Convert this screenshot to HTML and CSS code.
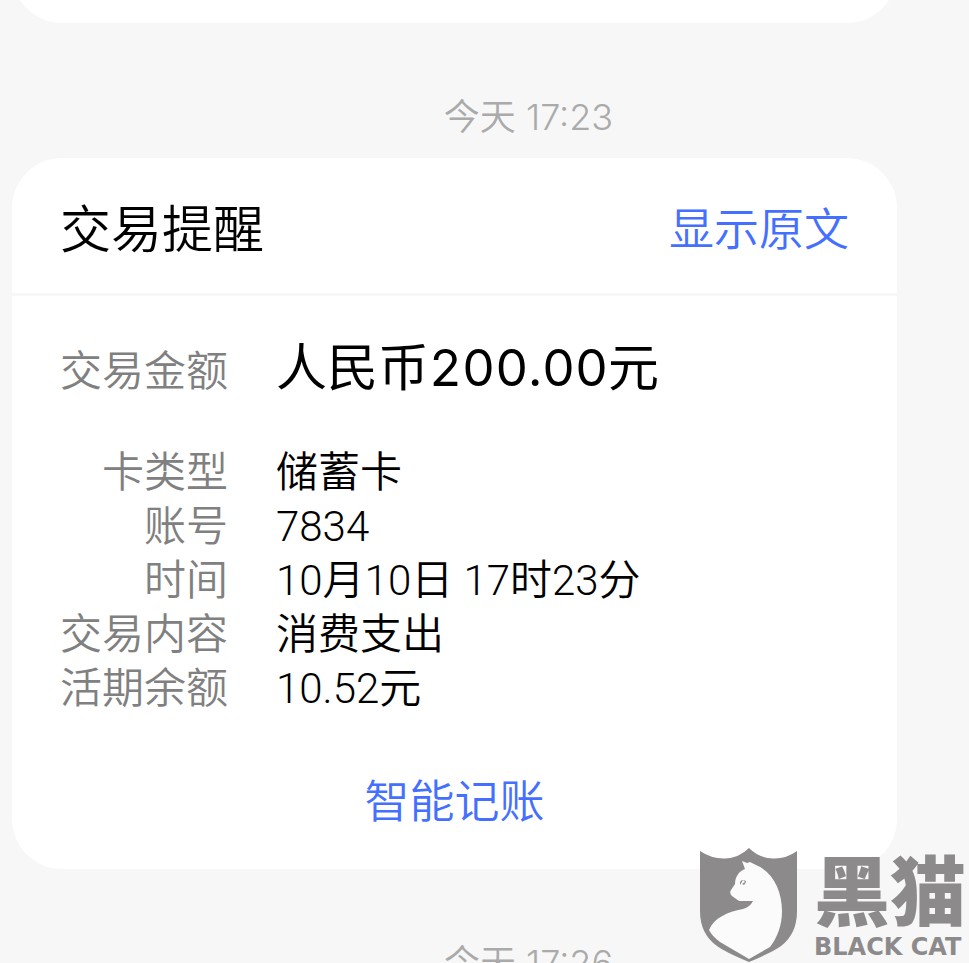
FILE: index.html
```html
<!DOCTYPE html>
<html lang="zh-CN">
<head>
<meta charset="utf-8">
<meta name="viewport" content="width=device-width, initial-scale=1">
<title>交易提醒</title>
<link rel="stylesheet" href="styles.css">
</head>
<body>
<main class="thread">
  <div class="card card-previous"></div>
  <time class="stamp">今天 17:23</time>
  <article class="card">
    <header class="card-header">
      <h1 class="title">交易提醒</h1>
      <button type="button" class="action">显示原文</button>
    </header>
    <div class="card-body">
      <dl class="amount">
        <dt>交易金额</dt><dd>人民币200.00元</dd>
      </dl>
      <dl class="details">
        <dt>卡类型</dt><dd>储蓄卡</dd>
        <dt>账号</dt><dd>7834</dd>
        <dt>时间</dt><dd>10月10日 17时23分</dd>
        <dt>交易内容</dt><dd>消费支出</dd>
        <dt>活期余额</dt><dd>10.52元</dd>
      </dl>
      <button type="button" class="action">智能记账</button>
    </div>
  </article>
  <time class="stamp">今天 17:26</time>
  <aside class="watermark">
    <svg class="shield" viewBox="0 0 98 116" aria-hidden="true">
      <path class="shield-base" d="M0 4Q12 12 25 11.500Q39 11 49 1Q59 11 73 11.500Q86 12 97 4V64Q97 87 81 99Q73 105 49 115Q25 105 17 99Q0 87 0 64Z"/>
      <path class="cat" d="M42 14L47 16L50 15L56 18C73 25 82 44 82 64C82 79 77 91 70 100L49 112L20 95Q12 89 9 83C14 71 27 65 43 62Q50 60 53 54L39 54L32 49Q29 46 31 43L35 37C35 30 39 24 45 22Z"/>
      <path class="shield-base" d="M40 35Q41 33 43 33L40 38ZM43 33L46 34Q46 36 44 38L42 37L45 35Z"/>
    </svg>
    <div class="brand">
      <span class="brand-cn">黑猫</span>
      <span class="brand-en">BLACK CAT</span>
    </div>
  </aside>
</main>
</body>
</html>
```
FILE: styles.css
```css
* { box-sizing: border-box; }

body {
  margin: 0;
  background: #f7f7f7;
  color: #000;
  font-family: Inter, "Noto Sans CJK SC", sans-serif;
  font-weight: 350;
}

.thread {
  position: relative;
  display: flow-root;
  height: 100vh;
  overflow: hidden;
}

.card {
  margin: 0 72px 0 12px;
  background: #fff;
  border-radius: 50px;
}

.card-previous {
  height: 120px;
  margin-top: -97px;
}

.stamp {
  display: block;
  padding: 72px 0 19px 88px;
  color: #aaa;
  font-size: 36px;
  line-height: 44px;
  text-align: center;
}

.card-header {
  display: flex;
  align-items: center;
  justify-content: space-between;
  padding: 40px 48px 31px;
  border-bottom: 3px solid #f7f7f7;
}

.title {
  margin: 0;
  font-size: 51px;
  font-weight: 350;
  line-height: 64px;
}

.action {
  padding: 0;
  border: 0;
  background: none;
  color: #456fff;
  font: inherit;
  font-size: 45px;
  line-height: 54px;
}

.card-body {
  display: flex;
  flex-direction: column;
  padding: 38px 48px 40px;
}

.card-body .action {
  align-self: center;
  margin-top: 59px;
}

dl {
  display: grid;
  grid-template-columns: 168px 1fr;
  column-gap: 48px;
  margin: 0;
  font-size: 42px;
  line-height: 54px;
}

dt {
  color: #808080;
  text-align: right;
}

dd { margin: 0; }

.details { font-family: Roboto, "Noto Sans CJK SC", sans-serif; }

.amount {
  align-items: baseline;
  margin-bottom: 44px;
}

.amount dd {
  font-size: 51px;
  font-variant-numeric: tabular-nums;
  font-weight: 400;
  line-height: 68px;
}

.watermark {
  position: absolute;
  right: 0;
  bottom: 0;
  display: flex;
  align-items: flex-end;
  gap: 16px;
  color: #8c8a8b;
}

.shield { width: 98px; height: 116px; }

.shield-base { fill: #8c8a8b; }

.cat { fill: #fbfbfb; }

.brand {
  display: flex;
  flex-direction: column;
  width: 155px;
}

.brand-cn {
  font-family: "Noto Sans CJK SC", sans-serif;
  font-size: 76px;
  font-weight: 900;
  line-height: 88px;
}

.brand-en {
  font-family: "DejaVu Sans", sans-serif;
  font-size: 24px;
  font-weight: 700;
  line-height: 32px;
  white-space: nowrap;
}
```
